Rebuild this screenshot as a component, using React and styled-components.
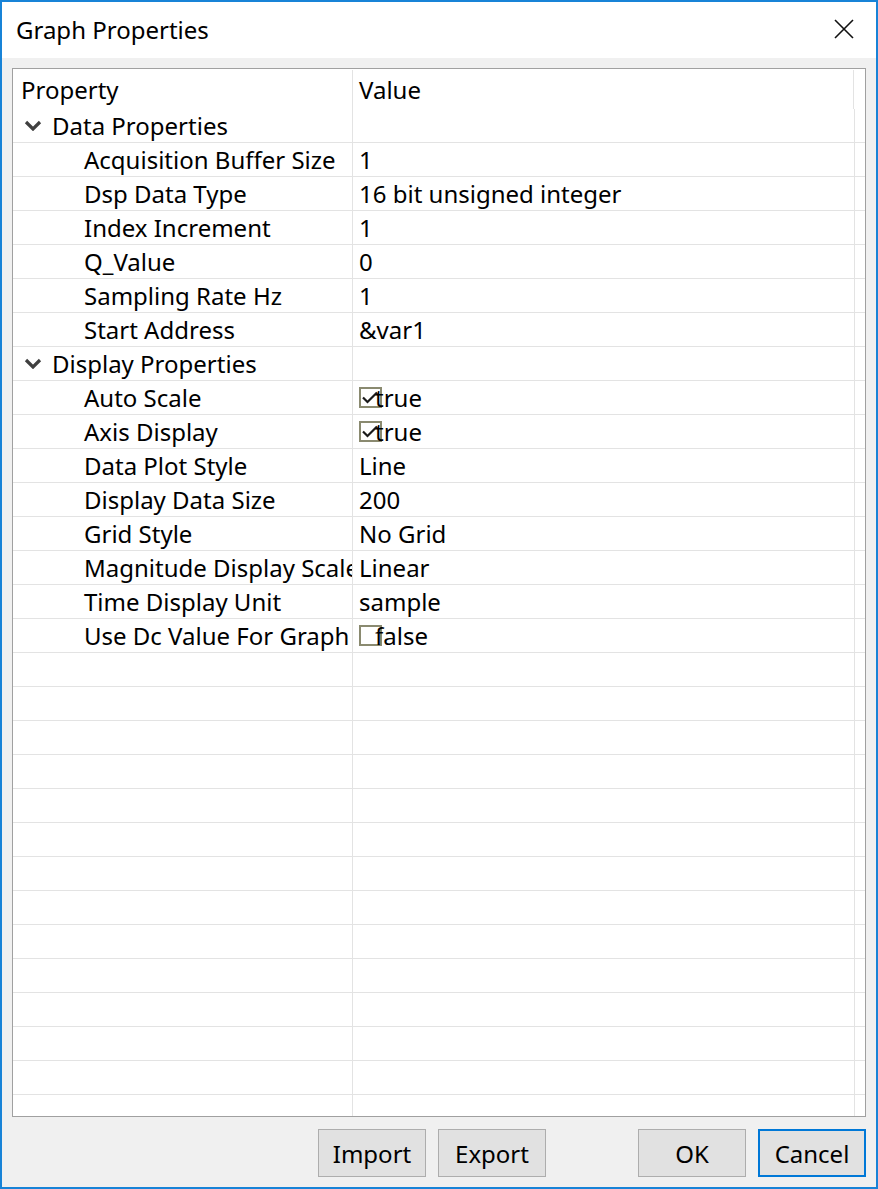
import React from "react";
import styled, { createGlobalStyle } from "styled-components";

const Global = createGlobalStyle`
  html, body { margin: 0; padding: 0; background: #f0f0f0; }
  body { font-family: "Noto Sans", "Open Sans", sans-serif; }
  * { box-sizing: border-box; }
`;

const Window = styled.div`
  width: 878px;
  height: 1189px;
  border: 2px solid #1883d7;
  background: #f0f0f0;
  display: flex;
  flex-direction: column;
  font-family: "Noto Sans", "Open Sans", sans-serif;
  font-size: 24px;
  color: #000;
`;

const TitleBar = styled.div`
  height: 56px;
  background: #fff;
  display: flex;
  align-items: center;
  justify-content: space-between;
  padding: 0 22px 2px 14px;
  flex-shrink: 0;
`;

const Title = styled.div`
  font-size: 24px;
`;

const CloseButton = styled.div`
  width: 20px;
  height: 20px;
  display: flex;
`;

const Body = styled.div`
  flex: 1;
  display: flex;
  flex-direction: column;
  padding: 10px;
  gap: 12px;
  min-height: 0;
`;

const Table = styled.div`
  flex: 1;
  background: #fff;
  border: 1px solid #a0a0a0;
  overflow: hidden;
  min-height: 0;
`;

const Row = styled.div`
  display: flex;
  height: ${(p) => (p.$header ? 40 : 34)}px;
  border-bottom: ${(p) => (p.$header ? "none" : "1px solid #e3e3e3")};
`;

const NameCell = styled.div`
  width: 340px;
  flex-shrink: 0;
  border-right: 1px solid #e3e3e3;
  display: flex;
  align-items: center;
  padding-left: ${(p) => p.$indent}px;
  white-space: nowrap;
  overflow: hidden;
  ${(p) => (p.$header ? "border-right-color: transparent;" : "")}
`;

const ValueCell = styled.div`
  width: 502px;
  flex-shrink: 0;
  border-right: 1px solid #e3e3e3;
  display: flex;
  align-items: center;
  padding-left: 6px;
  white-space: nowrap;
  overflow: hidden;
  ${(p) => (p.$header ? "border-left: 1px solid #e3e3e3; margin-left: -1px; margin-top: 1px;" : "")}
`;

const Chevron = styled.svg`
  width: 18px;
  height: 11px;
  margin-right: 10px;
  flex-shrink: 0;
`;

const CheckBox = styled.span`
  width: 23px;
  height: 21px;
  border: 2px solid #8a8a70;
  display: inline-flex;
  align-items: center;
  justify-content: center;
  flex-shrink: 0;
  margin-right: -7px;
  margin-top: -1px;
`;

const Footer = styled.div`
  display: flex;
  justify-content: flex-end;
  gap: 12px;
  flex-shrink: 0;
`;

const Button = styled.button`
  width: 108px;
  height: 48px;
  background: #e1e1e1;
  border: ${(p) => (p.$default ? "2px solid #0078d7" : "1px solid #adadad")};
  font-family: "Noto Sans", "Open Sans", sans-serif;
  font-size: 24px;
  color: #000;
  padding: 0;
  margin-right: ${(p) => p.$gapAfter || 0}px;
`;

const groups = [
  {
    name: "Data Properties",
    items: [
      ["Acquisition Buffer Size", "1"],
      ["Dsp Data Type", "16 bit unsigned integer"],
      ["Index Increment", "1"],
      ["Q_Value", "0"],
      ["Sampling Rate Hz", "1"],
      ["Start Address", "&var1"],
    ],
  },
  {
    name: "Display Properties",
    items: [
      ["Auto Scale", true],
      ["Axis Display", true],
      ["Data Plot Style", "Line"],
      ["Display Data Size", "200"],
      ["Grid Style", "No Grid"],
      ["Magnitude Display Scale", "Linear"],
      ["Time Display Unit", "sample"],
      ["Use Dc Value For Graph", false],
    ],
  },
];

function Value({ v }) {
  if (typeof v === "boolean") {
    return (
      <>
        <CheckBox>
          {v && (
            <svg width="17" height="13" viewBox="0 0 17 13">
              <path d="M1 6.5 L5.5 11 L15 1.5" fill="none" stroke="#1a1a1a" strokeWidth="2.2" />
            </svg>
          )}
        </CheckBox>
        <span>{v ? "true" : "false"}</span>
      </>
    );
  }
  return <span>{v}</span>;
}

export default function App() {
  const rows = [];
  groups.forEach((g) => {
    rows.push(
      <Row key={g.name}>
        <NameCell $indent={11}>
          <Chevron viewBox="0 0 18 11">
            <polyline points="2,2 9,9 16,2" fill="none" stroke="#404040" strokeWidth="3.2" />
          </Chevron>
          {g.name}
        </NameCell>
        <ValueCell />
      </Row>
    );
    g.items.forEach(([n, v]) =>
      rows.push(
        <Row key={n}>
          <NameCell $indent={71}>{n}</NameCell>
          <ValueCell>
            <Value v={v} />
          </ValueCell>
        </Row>
      )
    );
  });
  for (let i = 0; i < 14; i++) {
    rows.push(
      <Row key={"e" + i}>
        <NameCell />
        <ValueCell />
      </Row>
    );
  }
  return (
    <>
      <Global />
      <Window>
        <TitleBar>
          <Title>Graph Properties</Title>
          <CloseButton>
            <svg width="20" height="20" viewBox="0 0 20 20">
              <path d="M1 1 L19 19 M19 1 L1 19" stroke="#111" strokeWidth="1.6" />
            </svg>
          </CloseButton>
        </TitleBar>
        <Body>
          <Table>
            <Row $header>
              <NameCell $indent={8} $header>Property</NameCell>
              <ValueCell $header>Value</ValueCell>
            </Row>
            {rows}
          </Table>
          <Footer>
            <Button>Import</Button>
            <Button $gapAfter={80}>Export</Button>
            <Button>OK</Button>
            <Button $default>Cancel</Button>
          </Footer>
        </Body>
      </Window>
    </>
  );
}
